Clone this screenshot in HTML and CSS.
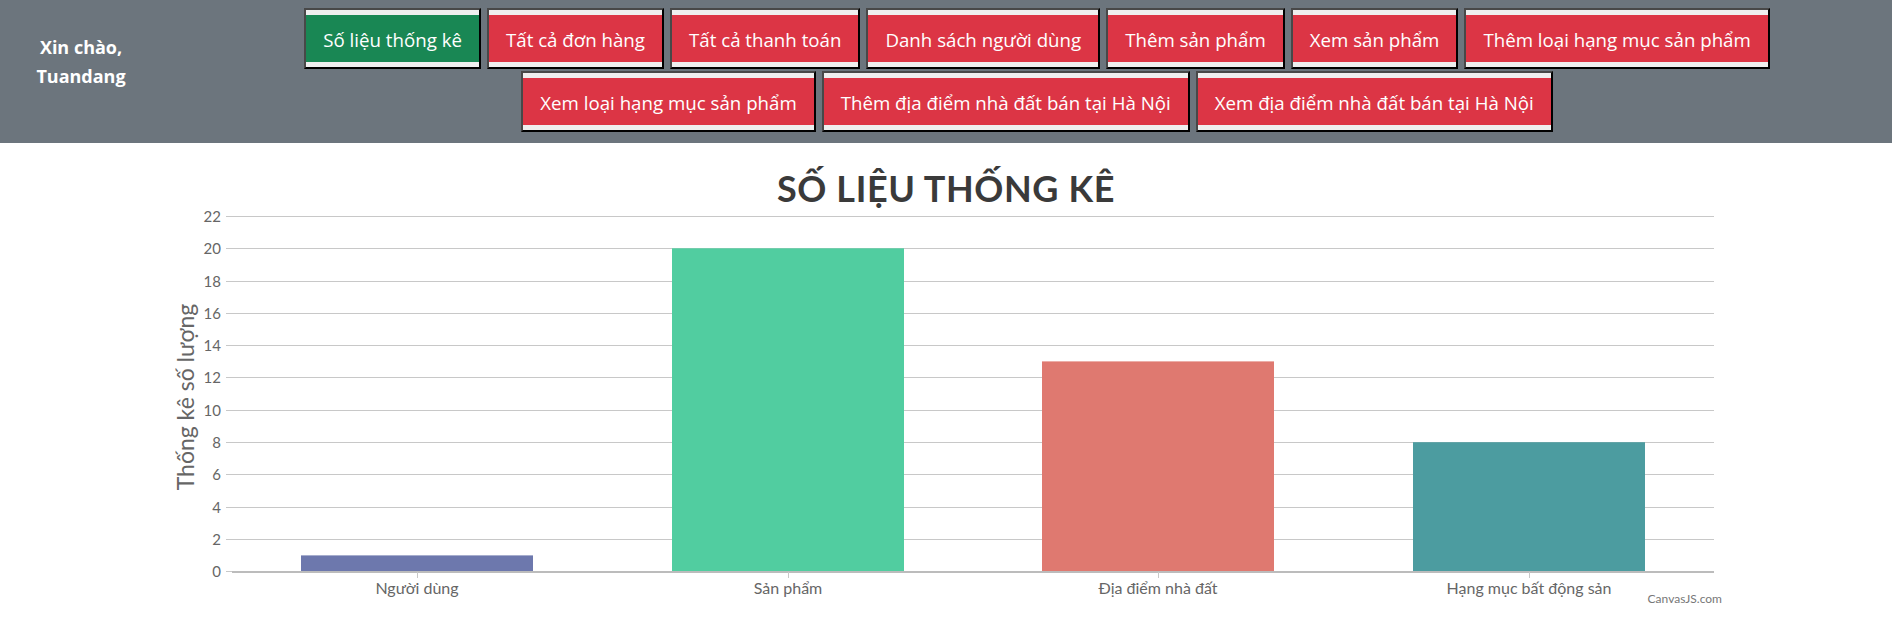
FILE: index.html
```html
<!DOCTYPE html>
<html lang="vi">
<head>
    <meta charset="UTF-8">
    <meta name="viewport" content="width=device-width, initial-scale=1.0">
    <title>Số liệu thống kê</title>
    <link rel="stylesheet" href="styles.css">
</head>
<body>

    <header class="topbar">
        <p class="greeting">Xin chào,<br>Tuandang</p>

        <nav class="menu">
            <a class="menu-btn" href="#"><span class="btn-face btn-success">Số liệu thống kê</span></a>
            <a class="menu-btn" href="#"><span class="btn-face btn-danger">Tất cả đơn hàng</span></a>
            <a class="menu-btn" href="#"><span class="btn-face btn-danger">Tất cả thanh toán</span></a>
            <a class="menu-btn" href="#"><span class="btn-face btn-danger">Danh sách người dùng</span></a>
            <a class="menu-btn" href="#"><span class="btn-face btn-danger">Thêm sản phẩm</span></a>
            <a class="menu-btn" href="#"><span class="btn-face btn-danger">Xem sản phẩm</span></a>
            <a class="menu-btn" href="#"><span class="btn-face btn-danger">Thêm loại hạng mục sản phẩm</span></a>
            <a class="menu-btn" href="#"><span class="btn-face btn-danger">Xem loại hạng mục sản phẩm</span></a>
            <a class="menu-btn" href="#"><span class="btn-face btn-danger">Thêm địa điểm nhà đất bán tại Hà Nội</span></a>
            <a class="menu-btn" href="#"><span class="btn-face btn-danger">Xem địa điểm nhà đất bán tại Hà Nội</span></a>
        </nav>
    </header>

    <!-- Chart: Thống kê số lượng -->
    <main class="chart-box">
        <svg class="chart" width="1892" height="481" viewBox="0 0 1892 481">
            <text class="chart-title" x="946" y="59">SỐ LIỆU THỐNG KÊ</text>

            <!-- grid lines + y labels -->
            <g class="grid">
                <line x1="226" y1="73.5" x2="1714" y2="73.5"/>
                <line x1="226" y1="105.5" x2="1714" y2="105.5"/>
                <line x1="226" y1="138.5" x2="1714" y2="138.5"/>
                <line x1="226" y1="170.5" x2="1714" y2="170.5"/>
                <line x1="226" y1="202.5" x2="1714" y2="202.5"/>
                <line x1="226" y1="234.5" x2="1714" y2="234.5"/>
                <line x1="226" y1="267.5" x2="1714" y2="267.5"/>
                <line x1="226" y1="299.5" x2="1714" y2="299.5"/>
                <line x1="226" y1="331.5" x2="1714" y2="331.5"/>
                <line x1="226" y1="364.5" x2="1714" y2="364.5"/>
                <line x1="226" y1="396.5" x2="1714" y2="396.5"/>
                <line x1="226" y1="428.5" x2="232" y2="428.5"/>
            </g>
            <g class="y-labels">
                <text x="221" y="79">22</text>
                <text x="221" y="111">20</text>
                <text x="221" y="144">18</text>
                <text x="221" y="176">16</text>
                <text x="221" y="208">14</text>
                <text x="221" y="240">12</text>
                <text x="221" y="273">10</text>
                <text x="221" y="305">8</text>
                <text x="221" y="337">6</text>
                <text x="221" y="370">4</text>
                <text x="221" y="402">2</text>
                <text x="221" y="434">0</text>
            </g>
            <text class="axis-title" transform="translate(194 254) rotate(-90)">Thống kê số lượng</text>

            <!-- bars -->
            <rect class="bar" x="301" y="412.4" width="232" height="16.1" fill="#6d78ad"/>
            <rect class="bar" x="672" y="105.3" width="232" height="323.2" fill="#51cda0"/>
            <rect class="bar" x="1042" y="218.4" width="232" height="210.1" fill="#df7970"/>
            <rect class="bar" x="1413" y="299.2" width="232" height="129.3" fill="#4c9ca0"/>

            <!-- x axis -->
            <line class="axis-line" x1="232" y1="429" x2="1714" y2="429"/>
            <g class="grid">
                <line x1="417.5" y1="429" x2="417.5" y2="435"/>
                <line x1="788.5" y1="429" x2="788.5" y2="435"/>
                <line x1="1158.5" y1="429" x2="1158.5" y2="435"/>
                <line x1="1529.5" y1="429" x2="1529.5" y2="435"/>
            </g>
            <g class="x-labels">
                <text x="417" y="451">Người dùng</text>
                <text x="788" y="451">Sản phẩm</text>
                <text x="1158" y="451">Địa điểm nhà đất</text>
                <text x="1529" y="451">Hạng mục bất động sản</text>
            </g>

            <text class="credit" x="1722" y="460">CanvasJS.com</text>
        </svg>
    </main>

</body>
</html>
```

FILE: styles.css
```css
body {
    margin: 0;
    font-family: "Open Sans", "Noto Sans", sans-serif;
    background-color: #fff;
    overflow: hidden;
}
.topbar {
    display: flex;
    align-items: flex-start;
    padding: 8px 0 11px;
    background-color: #6c757d;
}
.greeting {
    width: 162px;
    flex-shrink: 0;
    margin: 0;
    padding: 25px 20px 0 0;
    color: #fff;
    font-size: 18px;
    font-weight: 700;
    line-height: 29px;
    text-align: center;
}
.menu {
    flex: 1;
    display: flex;
    flex-wrap: wrap;
    justify-content: center;
    column-gap: 6px;
    row-gap: 2px;
}
.menu-btn {
    display: block;
    padding: 5px 0;
    border: 2px solid;
    border-color: #484848 #000 #000 #484848;
    background-color: #efefef;
    text-decoration: none;
}
.btn-face {
    display: block;
    padding: 9px 16px 7px;
    border: 1px solid;
    color: #fff;
    font-size: 18.7px;
    line-height: 29px;
    white-space: nowrap;
}
.btn-success {
    background-color: #198754;
    border-color: #198754;
}
.btn-danger {
    background-color: #dc3545;
    border-color: #dc3545;
}
.chart-box {
    display: block;
}
.chart {
    display: block;
    font-family: Lato, "Open Sans", sans-serif;
}
.chart-title {
    fill: #3a3a3a;
    font-size: 36px;
    font-weight: 700;
    letter-spacing: 0.6px;
    text-anchor: middle;
}
.grid line {
    stroke: #c8c8c8;
    stroke-width: 1;
}
.axis-line {
    stroke: #bcbcbc;
    stroke-width: 2;
}
.y-labels text {
    fill: #666;
    font-size: 15px;
    text-anchor: end;
}
.x-labels text {
    fill: #666;
    font-size: 16px;
    text-anchor: middle;
}
.axis-title {
    fill: #666;
    font-size: 23px;
    text-anchor: middle;
}
.credit {
    fill: #777;
    font-size: 12px;
    text-anchor: end;
}
```
